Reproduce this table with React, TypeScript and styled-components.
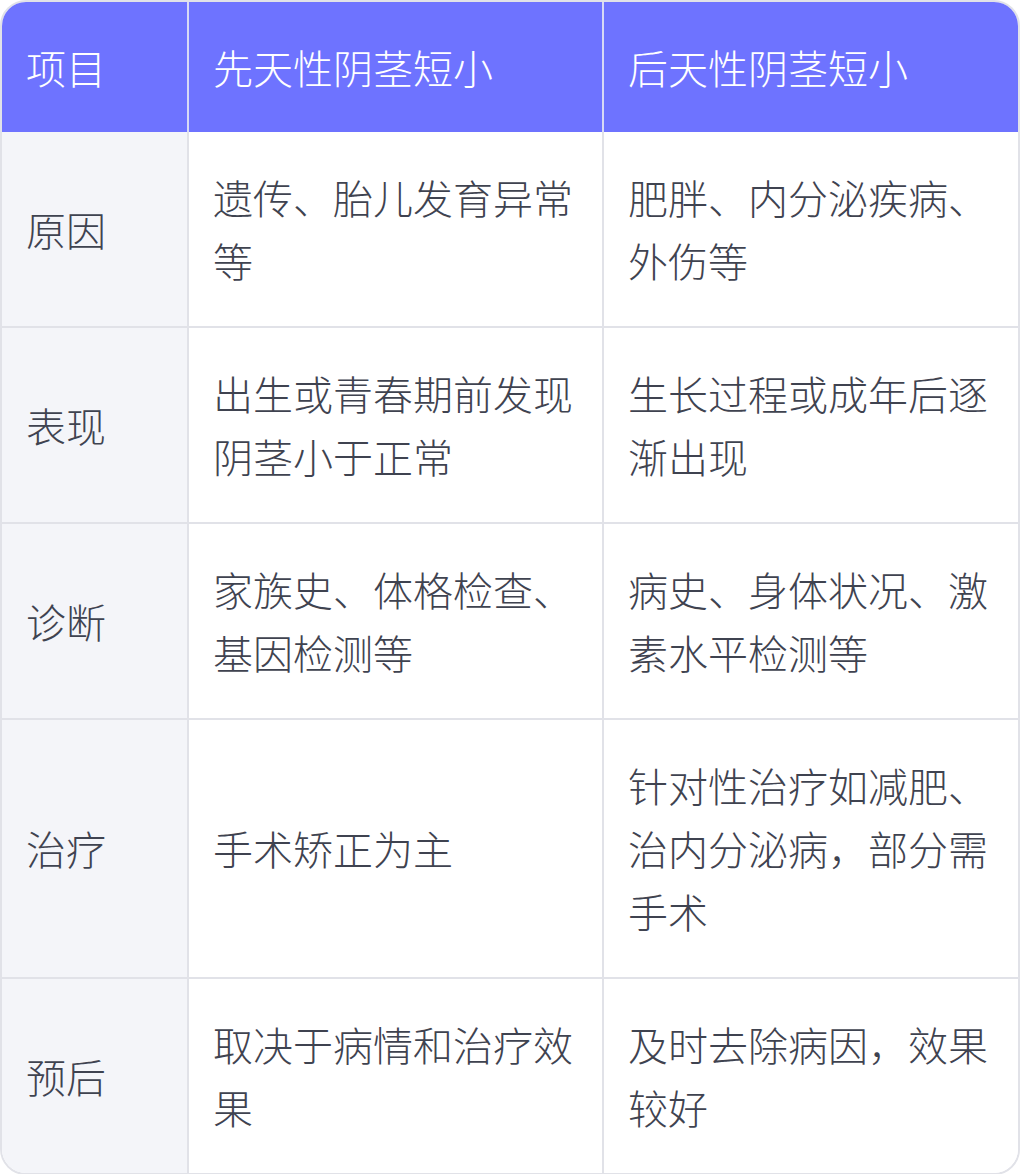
import React from 'react';
import styled, { createGlobalStyle } from 'styled-components';

const GlobalStyle = createGlobalStyle`
  html, body {
    margin: 0;
    padding: 0;
    background: #ffffff;
  }
  body {
    font-family: "Noto Sans CJK SC", "Noto Sans", sans-serif;
  }
`;

const Frame = styled.div`
  width: 1020px;
  box-sizing: border-box;
  border: 2px solid #e1e2e8;
  border-radius: 26px;
  overflow: hidden;
  background: #ffffff;
`;

const Table = styled.table`
  width: 100%;
  border-collapse: collapse;
  table-layout: fixed;
  font-size: 40px;
  line-height: 63px;
  color: #3c414d;
`;

const Cell = styled.td<{ $head?: boolean; $label?: boolean }>`
  padding: ${(p) => (p.$head ? '34px 24px 33px' : '34px 24px 34px')};
  vertical-align: middle;
  text-align: left;
  font-weight: 300;
  border-right: 2px solid ${(p) => (p.$head ? '#d7d9f5' : '#e1e2e8')};
  border-bottom: 2px solid #e1e2e8;
  background: ${(p) => (p.$head ? '#6e73ff' : p.$label ? '#f4f5f9' : '#ffffff')};
  color: ${(p) => (p.$head ? '#ffffff' : '#3f4350')};
  word-break: break-all;

  &:last-child {
    border-right: none;
  }
  tr:last-child > & {
    border-bottom: none;
  }
`;

const rows: [string, string, string][] = [
  ['原因', '遗传、胎儿发育异常等', '肥胖、内分泌疾病、外伤等'],
  ['表现', '出生或青春期前发现阴茎小于正常', '生长过程或成年后逐渐出现'],
  ['诊断', '家族史、体格检查、基因检测等', '病史、身体状况、激素水平检测等'],
  ['治疗', '手术矫正为主', '针对性治疗如减肥、治内分泌病，部分需手术'],
  ['预后', '取决于病情和治疗效果', '及时去除病因，效果较好'],
];

export default function App() {
  return (
    <>
      <GlobalStyle />
      <Frame>
        <Table>
          <colgroup>
            <col style={{ width: 186 }} />
            <col style={{ width: 415 }} />
            <col />
          </colgroup>
          <thead>
            <tr>
              <Cell as="th" $head>项目</Cell>
              <Cell as="th" $head>先天性阴茎短小</Cell>
              <Cell as="th" $head>后天性阴茎短小</Cell>
            </tr>
          </thead>
          <tbody>
            {rows.map(([label, born, later]) => (
              <tr key={label}>
                <Cell $label>{label}</Cell>
                <Cell>{born}</Cell>
                <Cell>{later}</Cell>
              </tr>
            ))}
          </tbody>
        </Table>
      </Frame>
    </>
  );
}
